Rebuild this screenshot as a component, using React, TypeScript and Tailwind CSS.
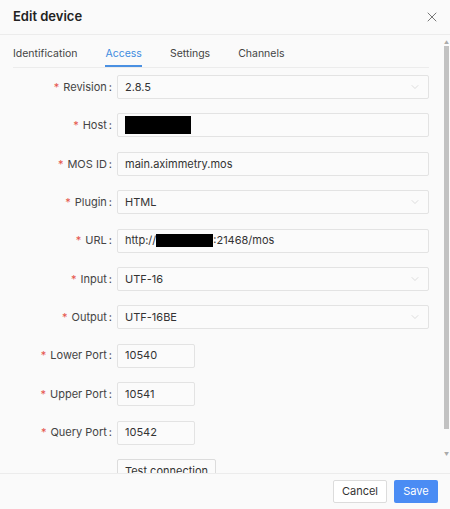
import { X, ChevronDown } from 'lucide-react';

type Row = {
  label: string;
  value?: string;
  kind: 'select' | 'input' | 'port' | 'host' | 'url';
};

const rows: Row[] = [
  { label: 'Revision', value: '2.8.5', kind: 'select' },
  { label: 'Host', kind: 'host' },
  { label: 'MOS ID', value: 'main.aximmetry.mos', kind: 'input' },
  { label: 'Plugin', value: 'HTML', kind: 'select' },
  { label: 'URL', kind: 'url' },
  { label: 'Input', value: 'UTF-16', kind: 'select' },
  { label: 'Output', value: 'UTF-16BE', kind: 'select' },
  { label: 'Lower Port', value: '10540', kind: 'port' },
  { label: 'Upper Port', value: '10541', kind: 'port' },
  { label: 'Query Port', value: '10542', kind: 'port' },
];

function Field({ row }: { row: Row }) {
  const base =
    'flex h-[24px] items-center rounded-[2px] border border-[#e3e3e3] bg-[#fbfbfb] px-[7px] text-[11px] text-[#333]';

  if (row.kind === 'port') {
    return <div className={`${base} w-[78px]`}>{row.value}</div>;
  }
  if (row.kind === 'host') {
    return (
      <div className={`${base} flex-1`}>
        <span className="h-[18px] w-[66px] bg-black" />
      </div>
    );
  }
  if (row.kind === 'url') {
    return (
      <div className={`${base} flex-1`}>
        <span>http://</span>
        <span className="h-[13px] w-[57px] bg-black" />
        <span>:21468/mos</span>
      </div>
    );
  }
  return (
    <div className={`${base} flex-1 justify-between`}>
      <span>{row.value}</span>
      {row.kind === 'select' && <ChevronDown className="h-[12px] w-[12px] text-[#c8c8c8]" strokeWidth={1.2} />}
    </div>
  );
}

export default function App() {
  return (
    <div
      className="flex h-[509px] w-[450px] flex-col overflow-hidden bg-[#fafafa] text-[#333]"
      style={{ fontFamily: 'Inter, "Noto Sans", sans-serif' }}
    >
      <header className="flex h-[35px] shrink-0 items-center justify-between border-b border-[#ececec] pl-[13px] pr-[10px]">
        <h2 className="text-[13px] font-semibold text-[#222]">Edit device</h2>
        <X className="h-[16px] w-[16px] text-[#555]" strokeWidth={1.2} />
      </header>

      <div className="flex min-h-0 flex-1">
        <div className="min-w-0 flex-1 overflow-hidden pl-[13px] pr-[15px]">
          <nav className="flex h-[33px] items-end gap-[28px] border-b border-[#ececec] text-[10.5px]">
            <span className="pb-[5px] text-[#444]">Identification</span>
            <span className="border-b-2 border-[#4a90e2] pb-[3px] text-[#3d8be0]">Access</span>
            <span className="pb-[5px] text-[#444]">Settings</span>
            <span className="pb-[5px] text-[#444]">Channels</span>
          </nav>

          <div className="mt-[7px] flex flex-col gap-[14.4px]">
            {rows.map((row) => (
              <div key={row.label} className="flex items-center gap-[5px]">
                <label className="flex w-[99px] shrink-0 items-center justify-end text-[11px] text-[#444]">
                  <span className="mr-[4px] text-[#e5534b]">*</span>
                  {row.label}
                  <span className="ml-[2px]">:</span>
                </label>
                <Field row={row} />
              </div>
            ))}
            <div className="flex gap-[5px]">
              <div className="w-[99px] shrink-0" />
              <button className="h-[24px] w-[99px] rounded-[2px] border border-[#dcdcdc] bg-[#fbfbfb] text-[11px] text-[#333]">
                Test connection
              </button>
            </div>
          </div>
        </div>

        <div className="flex w-[6px] shrink-0 flex-col items-center pb-[16px] pt-[5px] pr-[1px]">
          <span className="text-[5px] leading-[5px] text-[#aaa]">▲</span>
          <div className="mt-[1px] h-[383px] w-[5px] bg-[#c2c2c2]" />
          <div className="flex-1" />
          <span className="text-[5px] leading-[5px] text-[#aaa]">▼</span>
        </div>
      </div>

      <footer className="flex h-[36px] shrink-0 items-center justify-end gap-[7px] border-t border-[#ececec] pr-[12px]">
        <button className="h-[23px] w-[54px] rounded-[2px] border border-[#dcdcdc] bg-white text-[11px] text-[#333]">
          Cancel
        </button>
        <button className="h-[23px] w-[44px] rounded-[2px] bg-[#4a8cf4] text-[11px] text-white">Save</button>
      </footer>
    </div>
  );
}
